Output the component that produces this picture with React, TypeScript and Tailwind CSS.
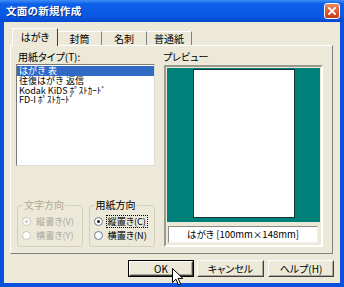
const font = "[font-family:'Noto_Sans_CJK_JP',sans-serif] [font-feature-settings:'palt']";

const Radio = ({ checked, disabled }: { checked?: boolean; disabled?: boolean }) => (
  <span
    className={`shrink-0 flex items-center justify-center size-[9px] rounded-full border bg-white ${
      disabled ? "border-[#c9c7ba]" : "border-[#6a7d8e]"
    }`}
  >
    {checked && (
      <span className={`size-[3px] rounded-full ${disabled ? "bg-[#c9c7ba]" : "bg-[#1f1f1f]"}`} />
    )}
  </span>
);

const Group = ({
  title,
  disabled,
  items,
}: {
  title: string;
  disabled?: boolean;
  items: { label: string; checked?: boolean; focus?: boolean }[];
}) => (
  <fieldset className="h-[48px] border border-[#d0d0bf] rounded-[3px] pl-[4px] pr-[2px]">
    <legend className={`px-[1px] ml-[1px] text-[10px] leading-[12px] ${disabled ? "text-[#aca899]" : "text-black"}`}>
      {title}
    </legend>
    <div className="flex flex-col gap-[2px] pt-[4px]">
      {items.map((it) => (
        <div key={it.label} className="flex items-center gap-[4px] h-[12px] whitespace-nowrap">
          <Radio checked={it.checked} disabled={disabled} />
          <span
            className={`text-[9.2px] leading-[11px] px-[1px] ${disabled ? "text-[#aca899]" : "text-black"} ${
              it.focus ? "outline outline-1 outline-dotted outline-black" : ""
            }`}
          >
            {it.label}
          </span>
        </div>
      ))}
    </div>
  </fieldset>
);

const Btn = ({ label, w, def }: { label: string; w: string; def?: boolean }) => (
  <div className={`${w} h-[17px] ${def ? "border border-black" : ""}`}>
    <div className="h-full border border-t-white border-l-white border-b-[#404040] border-r-[#404040] bg-[#ece9d8]">
      <div className="h-full flex items-center justify-center border border-transparent border-b-[#aca899] border-r-[#aca899] text-[10px] leading-none">
        {label}
      </div>
    </div>
  </div>
);

export default function App() {
  const items = ["はがき 表", "往復はがき 返信", "Kodak KiDS ﾎﾟｽﾄｶｰﾄﾞ", "FD-I ﾎﾟｽﾄｶｰﾄﾞ"];
  const tabs = [
    { label: "封筒", w: "w-[44px]" },
    { label: "名刺", w: "w-[45px]" },
    { label: "普通紙", w: "w-[45px]" },
  ];

  return (
    <div className={`relative w-[344px] h-[287px] flex flex-col bg-[#0a52dd] ${font}`}>
      {/* title bar */}
      <div className="h-[22px] flex items-center justify-between pl-[6px] pr-[4px] bg-[linear-gradient(to_bottom,#3f8ef6_0%,#0d5fe9_18%,#0a58e4_70%,#0548cf_100%)]">
        <span className="text-white font-bold text-[10.5px] leading-none tracking-[0.3px] [text-shadow:1px_1px_0_#0a2a8a]">
          文面の新規作成
        </span>
        <div className="size-[16px] rounded-[3px] border border-white bg-[linear-gradient(to_bottom,#ee8a68,#d9532c_60%,#c13c16)] flex items-center justify-center">
          <svg width="10" height="10" viewBox="0 0 10 10">
            <path d="M2 2 L8 8 M8 2 L2 8" stroke="white" strokeWidth="1.8" strokeLinecap="square" />
          </svg>
        </div>
      </div>

      {/* body */}
      <div className="flex-1 mx-[4px] mb-[4px] bg-[#ece9d8] flex flex-col pt-[6px] text-black">
        {/* tabs */}
        <div className="relative z-10 flex items-end h-[17px] pl-[8px]">
          <div className="w-[46px] h-[18px] -mb-[1px] bg-[#ece9d8] border-t border-l border-white border-r border-r-[#404040] flex items-start justify-center pt-[2px] text-[10px] leading-[12px]">
            はがき
          </div>
          {tabs.map((t) => (
            <div
              key={t.label}
              className={`${t.w} h-[14px] border-t border-white border-r border-r-[#808080] flex items-center justify-center text-[10px] leading-none pt-[1px]`}
            >
              {t.label}
            </div>
          ))}
        </div>

        {/* panel */}
        <div className="ml-[6px] mr-[7px] h-[209px] border border-t-white border-l-white border-r-[#808080] border-b-[#808080] pt-[5px] pl-[5px] pr-[9px] grid grid-cols-[139px_159px] gap-x-[9px]">
          {/* left column */}
          <div className="flex flex-col h-[196px]">
            <div className="h-[13px] pl-[2px] text-[10px] leading-[11px]">用紙タイプ(T):</div>
            <div className="h-[102px] bg-white border border-t-[#7a7a7a] border-l-[#7a7a7a] border-b-[#dcdcd4] border-r-[#dcdcd4] pt-[1px] [font-feature-settings:normal]">
              {items.map((it, i) => (
                <div
                  key={it}
                  className={`h-[9.7px] flex items-center pl-[2px] text-[9px] leading-[9px] whitespace-nowrap ${
                    i === 0 ? "bg-[#316ac5] text-white" : ""
                  }`}
                >
                  {it}
                </div>
              ))}
            </div>
            <div className="flex-1" />
            <div className="flex gap-[6px] pl-[1px]">
              <div className="w-[66px]">
                <Group
                  title="文字方向"
                  disabled
                  items={[{ label: "縦書き(V)", checked: true }, { label: "横書き(Y)" }]}
                />
              </div>
              <div className="w-[67px]">
                <Group
                  title="用紙方向"
                  items={[{ label: "縦置き(C)", checked: true, focus: true }, { label: "横置き(N)" }]}
                />
              </div>
            </div>
          </div>

          {/* right column */}
          <div className="flex flex-col">
            <div className="h-[14px] -ml-[1px] text-[10px] leading-[11px]">プレビュー</div>
            <div className="h-[182px] border-2 border-t-[#9a9a90] border-l-[#9a9a90] border-b-white border-r-white p-[1px] flex flex-col">
              <div className="h-[154px] bg-[#00807b] flex justify-center pt-[1px]">
                <div className="w-[102px] h-[149px] bg-white border border-[#173535]" />
              </div>
              <div className="mt-[4px] mx-[1px] mr-[2px] h-[17px] bg-white border border-t-[#8a8a8a] border-l-[#8a8a8a] border-b-[#f0f0f0] border-r-[#f0f0f0] flex items-center justify-center text-[9.5px] leading-none">
                はがき [100mm×148mm]
              </div>
            </div>
          </div>
        </div>

        {/* buttons */}
        <div className="mt-[6px] flex justify-end pr-[6px]">
          <Btn label="OK" w="w-[66px]" def />
          <div className="w-[3px]" />
          <Btn label="キャンセル" w="w-[67px]" />
          <div className="w-[4px]" />
          <Btn label="ヘルプ(H)" w="w-[66px]" />
        </div>
      </div>

      {/* mouse cursor */}
      <svg className="absolute left-[172px] top-[268px]" width="12" height="18" viewBox="0 0 12 18">
        <path d="M0.5 0.5 L0.5 14.5 L4 11.2 L6.5 17 L8.6 16 L6.1 10.4 L10.8 10.4 Z" fill="white" stroke="black" strokeWidth="1" />
      </svg>
    </div>
  );
}
